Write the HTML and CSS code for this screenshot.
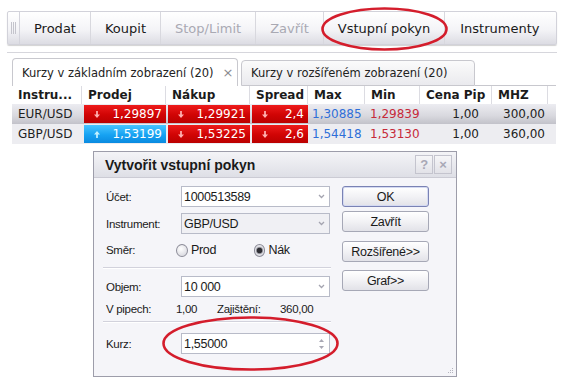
FILE: index.html
```html
<!DOCTYPE html>
<html lang="cs">
  <head>
    <meta charset="UTF-8" />
    <title>Vstupní pokyn</title>
    <link rel="stylesheet" href="styles.css">
  </head>
  <body>
    <div class="toolbar">
      <span class="grip"></span>
      <span class="tb">Prodat</span>
      <span class="tb">Koupit</span>
      <span class="tb off">Stop/Limit</span>
      <span class="tb off">Zavřít</span>
      <span class="tb">Vstupní pokyn</span>
      <span class="tb last">Instrumenty</span>
    </div>
    <div class="rule"></div>

    <div class="tabs">
      <div class="tab active">Kurzy v základním zobrazení (20) <span class="tab-x">×</span></div>
      <div class="tab">Kurzy v rozšířeném zobrazení (20)</div>
      <div class="tab-fill"></div>
    </div>

    <div class="grid">
      <div class="gh">
        <span>Instru...</span>
        <span>Prodej</span>
        <span>Nákup</span>
        <span>Spread</span>
        <span>Max</span>
        <span>Min</span>
        <span>Cena Pip</span>
        <span>MHZ</span>
        <span class="none"></span>
      </div>
      <div class="gr sel">
        <span class="c name">EUR/USD</span>
        <span class="c q dn"><svg class="arr" viewBox="0 0 7 8"><polygon points="2.5,0 4.5,0 4.5,4 7,4 3.5,8 0,4 2.5,4"/></svg>1,29897</span>
        <span class="c q dn"><svg class="arr" viewBox="0 0 7 8"><polygon points="2.5,0 4.5,0 4.5,4 7,4 3.5,8 0,4 2.5,4"/></svg>1,29921</span>
        <span class="c q dn"><svg class="arr" viewBox="0 0 7 8"><polygon points="2.5,0 4.5,0 4.5,4 7,4 3.5,8 0,4 2.5,4"/></svg>2,4</span>
        <span class="c hi">1,30885</span>
        <span class="c lo">1,29839</span>
        <span class="c num pip">1,00</span>
        <span class="c num">300,00</span>
        <span class="c"></span>
      </div>
      <div class="gr">
        <span class="c name">GBP/USD</span>
        <span class="c q up"><svg class="arr" viewBox="0 0 7 8"><polygon points="2.5,8 4.5,8 4.5,4 7,4 3.5,0 0,4 2.5,4"/></svg>1,53199</span>
        <span class="c q dn"><svg class="arr" viewBox="0 0 7 8"><polygon points="2.5,0 4.5,0 4.5,4 7,4 3.5,8 0,4 2.5,4"/></svg>1,53225</span>
        <span class="c q dn"><svg class="arr" viewBox="0 0 7 8"><polygon points="2.5,0 4.5,0 4.5,4 7,4 3.5,8 0,4 2.5,4"/></svg>2,6</span>
        <span class="c hi">1,54418</span>
        <span class="c lo">1,53130</span>
        <span class="c num pip">1,00</span>
        <span class="c num">360,00</span>
        <span class="c"></span>
      </div>
    </div>

    <!-- dialog floats over the rates grid -->
    <div class="dlg">
      <div class="dlg-title">
        <span class="dlg-name">Vytvořit vstupní pokyn</span>
        <span class="tbtn">?</span>
        <span class="tbtn">×</span>
      </div>
      <div class="dlg-body">
        <div class="form">
          <div class="frow">
            <label>Účet:</label>
            <div class="field">1000513589<span class="dd"><svg viewBox="0 0 7 5"><polyline points="1,1 3.5,3.5 6,1"/></svg></span></div>
          </div>
          <div class="frow r2">
            <label>Instrument:</label>
            <div class="field dis">GBP/USD<span class="dd"><svg viewBox="0 0 7 5"><polyline points="1,1 3.5,3.5 6,1"/></svg></span></div>
          </div>
          <div class="frow r3">
            <label>Směr:</label>
            <span class="radio"></span><span class="rlabel">Prod</span>
            <span class="radio on"></span><span class="rlabel">Nák</span>
          </div>
          <div class="sep s1"></div>
          <div class="frow r4">
            <label>Objem:</label>
            <div class="field">10 000<span class="dd"><svg viewBox="0 0 7 5"><polyline points="1,1 3.5,3.5 6,1"/></svg></span></div>
          </div>
          <div class="frow info">
            <span class="i1">V pipech:</span>
            <span class="i2">1,00</span>
            <span class="i3">Zajištění:</span>
            <span>360,00</span>
          </div>
          <div class="sep s2"></div>
          <div class="frow r5">
            <label>Kurz:</label>
            <div class="field">1,55000<span class="spin"><svg viewBox="0 0 7 12"><polygon points="1,4 3.5,1 6,4"/><polygon points="1,8 3.5,11 6,8"/></svg></span></div>
          </div>
        </div>
        <div class="btns">
          <span class="btn def">OK</span>
          <span class="btn b2">Zavřít</span>
          <span class="btn b3">Rozšířené&gt;&gt;</span>
          <span class="btn b4">Graf&gt;&gt;</span>
        </div>
      </div>
      <svg class="grip-corner" viewBox="0 0 6 6"><rect x="4" y="0" width="1" height="1"/><rect x="2" y="2" width="1" height="1"/><rect x="4" y="2" width="1" height="1"/><rect x="0" y="4" width="1" height="1"/><rect x="2" y="4" width="1" height="1"/><rect x="4" y="4" width="1" height="1"/></svg>
    </div>

    <!-- red hand-drawn marks -->
    <svg class="marks" viewBox="0 0 566 385">
      <ellipse cx="384.5" cy="29" rx="62" ry="20.5"/>
      <ellipse cx="250.5" cy="343.5" rx="87" ry="26"/>
    </svg>
  </body>
</html>
```

FILE: styles.css
```css
* {
  box-sizing: border-box;
}

body {
  margin: 0;
  width: 566px;
  height: 385px;
  overflow: hidden;
  position: relative;
  background: #ffffff;
  color: #1b1b1b;
  font-family: "DejaVu Sans", Verdana, sans-serif;
  font-size: 12px;
}

/* toolbar */
.toolbar {
  display: flex;
  margin: 11px 0 0 7px;
  width: 550px;
  height: 34px;
  border: 1px solid #d2d2da;
  border-radius: 2px;
  background: linear-gradient(#ffffff, #f4f4f7 55%, #dcdce3);
  box-shadow: 0 1px 1px rgba(0, 0, 0, 0.18);
}

.grip {
  width: 12px;
  border-right: 1px solid #d4d4dc;
  background: repeating-linear-gradient(to right, #c4c4cc 0 1px, transparent 1px 2px) center / 5px 12px no-repeat;
}

.tb {
  display: flex;
  align-items: center;
  padding: 0 14px;
  border-right: 1px solid #d8d8de;
  font-size: 13px;
  color: #1a1a1a;
}

.tb.off {
  color: #a9a9b3;
}

.tb.last {
  border-right: none;
  padding: 0 14px 0 15px;
}

.rule {
  margin: 7px 0 0 7px;
  width: 550px;
  border-top: 1px solid #d6d6dc;
}

/* tabs */
.tabs {
  display: flex;
  align-items: flex-end;
  margin: 5px 0 0 12px;
  width: 544px;
  height: 28px;
}

.tab {
  display: flex;
  align-items: center;
  height: 26px;
  width: 234px;
  padding-left: 9px;
  margin-left: 3px;
  border: 1px solid #c8c8ce;
  border-radius: 4px 4px 0 0;
  background: linear-gradient(#fbfbfb, #eaeaee);
  color: #222;
  font-size: 11.5px;
  white-space: nowrap;
}

.tab.active {
  height: 28px;
  width: 226px;
  margin-left: 0;
  border-bottom: none;
  background: #ffffff;
}

.tab-x {
  margin-left: 9px;
  color: #8a8a90;
  font-size: 13px;
}

.tab-fill {
  flex: 1;
  border-bottom: 1px solid #c8c8ce;
}

/* rates grid */
.grid {
  margin-left: 12px;
  width: 544px;
}

.gh,
.gr {
  display: grid;
  grid-template-columns: 70px 84px 84px 58px 57px 55px 72px 56px 8px;
}

.gh {
  height: 18px;
  font-weight: bold;
}

.gh span {
  display: flex;
  align-items: center;
  padding-left: 6px;
  border-right: 1px solid #dcdce2;
}

.gh span.none {
  border-right: none;
}

.gr {
  height: 20px;
  background: #ededf1;
}

.gr.sel {
  background: linear-gradient(#ececf1, #d8d8de 60%, #c2c2ca);
}

.c {
  display: flex;
  align-items: center;
  white-space: nowrap;
}

.name {
  padding-left: 6px;
  color: #1e1e1e;
}

.q {
  justify-content: space-between;
  margin: 1px 0 1px 2px;
  padding: 0 4px 0 10px;
  color: #ffffff;
}

.q.dn {
  background: linear-gradient(#ee1b1b, #d00404 55%, #bb0000);
}

.q.up {
  background: linear-gradient(#48c4ff, #16a2f2 55%, #0a8ae0);
}

.arr {
  width: 6px;
  height: 7px;
}

.dn .arr {
  fill: #ffb2b2;
}

.up .arr {
  fill: #c4f2ff;
}

.hi {
  padding-left: 4px;
  color: #2f6fd8;
}

.lo {
  padding-left: 5px;
  color: #c62a3a;
}

.num {
  justify-content: flex-end;
  padding-right: 3px;
  color: #222;
}

.num.pip {
  padding-right: 13px;
}

/* dialog */
.dlg {
  position: absolute;
  left: 93px;
  top: 151px;
  width: 364px;
  height: 226px;
  border: 1px solid #9d9daa;
  background: #f5f5f9;
  font-family: "Liberation Sans", Arial, sans-serif;
  font-size: 11.5px;
  letter-spacing: -0.3px;
  color: #1a1a1a;
}

.dlg-title {
  display: flex;
  align-items: center;
  height: 26px;
  padding: 0 4px 0 11px;
  background: linear-gradient(#f4f4f7, #dedfe6);
  border-bottom: 1px solid #cbcbd4;
}

.dlg-name {
  flex: 1;
  font-size: 14px;
  font-weight: bold;
  letter-spacing: 0;
}

.tbtn {
  display: flex;
  align-items: center;
  justify-content: center;
  width: 18px;
  height: 19px;
  margin-left: 1px;
  border: 1px solid #c4c4ce;
  background: linear-gradient(#f6f6f8, #e2e2e8);
  color: #a8a8b6;
  font-weight: bold;
  font-size: 13px;
}

.dlg-body {
  display: flex;
  gap: 11px;
  padding: 8px 0 0 9px;
}

.form {
  width: 228px;
}

.frow {
  display: flex;
  align-items: center;
  height: 21px;
}

.frow label {
  width: 78px;
  padding-left: 3px;
}

.r2 {
  margin-top: 6px;
}

.r3 {
  margin-top: 5px;
  height: 22px;
}

.r4 {
  margin-top: 7px;
}

.r5 {
  margin-top: 10px;
}

.field {
  display: flex;
  align-items: center;
  width: 149px;
  height: 21px;
  padding-left: 2px;
  border: 1px solid #b8bbc8;
  background: #ffffff;
  font-size: 12.5px;
}

.field.dis {
  background: #f0f0f4;
}

.dd,
.spin {
  display: flex;
  align-items: center;
  justify-content: center;
  margin-left: auto;
  width: 15px;
  height: 100%;
}

.dd svg {
  width: 7px;
  height: 5px;
  fill: none;
  stroke: #a4a4b0;
  stroke-width: 1.3;
}

.spin svg {
  width: 7px;
  height: 12px;
  fill: #a8a8b4;
}

.radio {
  width: 13px;
  height: 13px;
  margin-left: 2px;
  border: 1px solid #8c8c98;
  border-radius: 50%;
  background: radial-gradient(circle at 40% 35%, #ffffff, #dcdce2 75%);
}

.radio.on {
  margin-left: 0;
  background: radial-gradient(circle, #2e2e34 0 2.5px, #8a8a92 3px, #dcdce2 4px, #f4f4f6);
}

.rlabel {
  width: 72px;
  padding-left: 3px;
  font-size: 12.5px;
}

.sep {
  width: 228px;
  height: 2px;
  border-top: 1px solid #d2d2dc;
  border-bottom: 1px solid #ffffff;
}

.s1 {
  margin-top: 6px;
}

.s2 {
  margin-top: 2px;
}

.info {
  height: 20px;
  margin-top: 2px;
  padding-left: 3px;
}

.i1 {
  width: 70px;
}

.i2 {
  width: 41px;
}

.i3 {
  width: 63px;
}

.btns {
  display: flex;
  flex-direction: column;
  width: 87px;
}

.btn {
  display: flex;
  align-items: center;
  justify-content: center;
  height: 21px;
  border: 1px solid #a6a8b6;
  border-radius: 3px;
  background: linear-gradient(#ffffff, #f2f2f5 50%, #e2e2e8);
  font-size: 12.5px;
}

.btn.def {
  border-color: #7a82b4;
  box-shadow: inset 0 0 0 1px #d4daf2;
}

.b2 {
  margin-top: 4px;
}

.b3 {
  margin-top: 9px;
}

.b4 {
  margin-top: 8px;
}

.grip-corner {
  position: absolute;
  right: 2px;
  bottom: 2px;
  width: 6px;
  height: 6px;
  fill: #b4b4be;
}

/* annotation ellipses drawn over the screenshot */
.marks {
  position: absolute;
  left: 0;
  top: 0;
  width: 566px;
  height: 385px;
  pointer-events: none;
}

.marks ellipse {
  fill: none;
  stroke: #d41d2c;
  stroke-width: 2.6;
}
```
